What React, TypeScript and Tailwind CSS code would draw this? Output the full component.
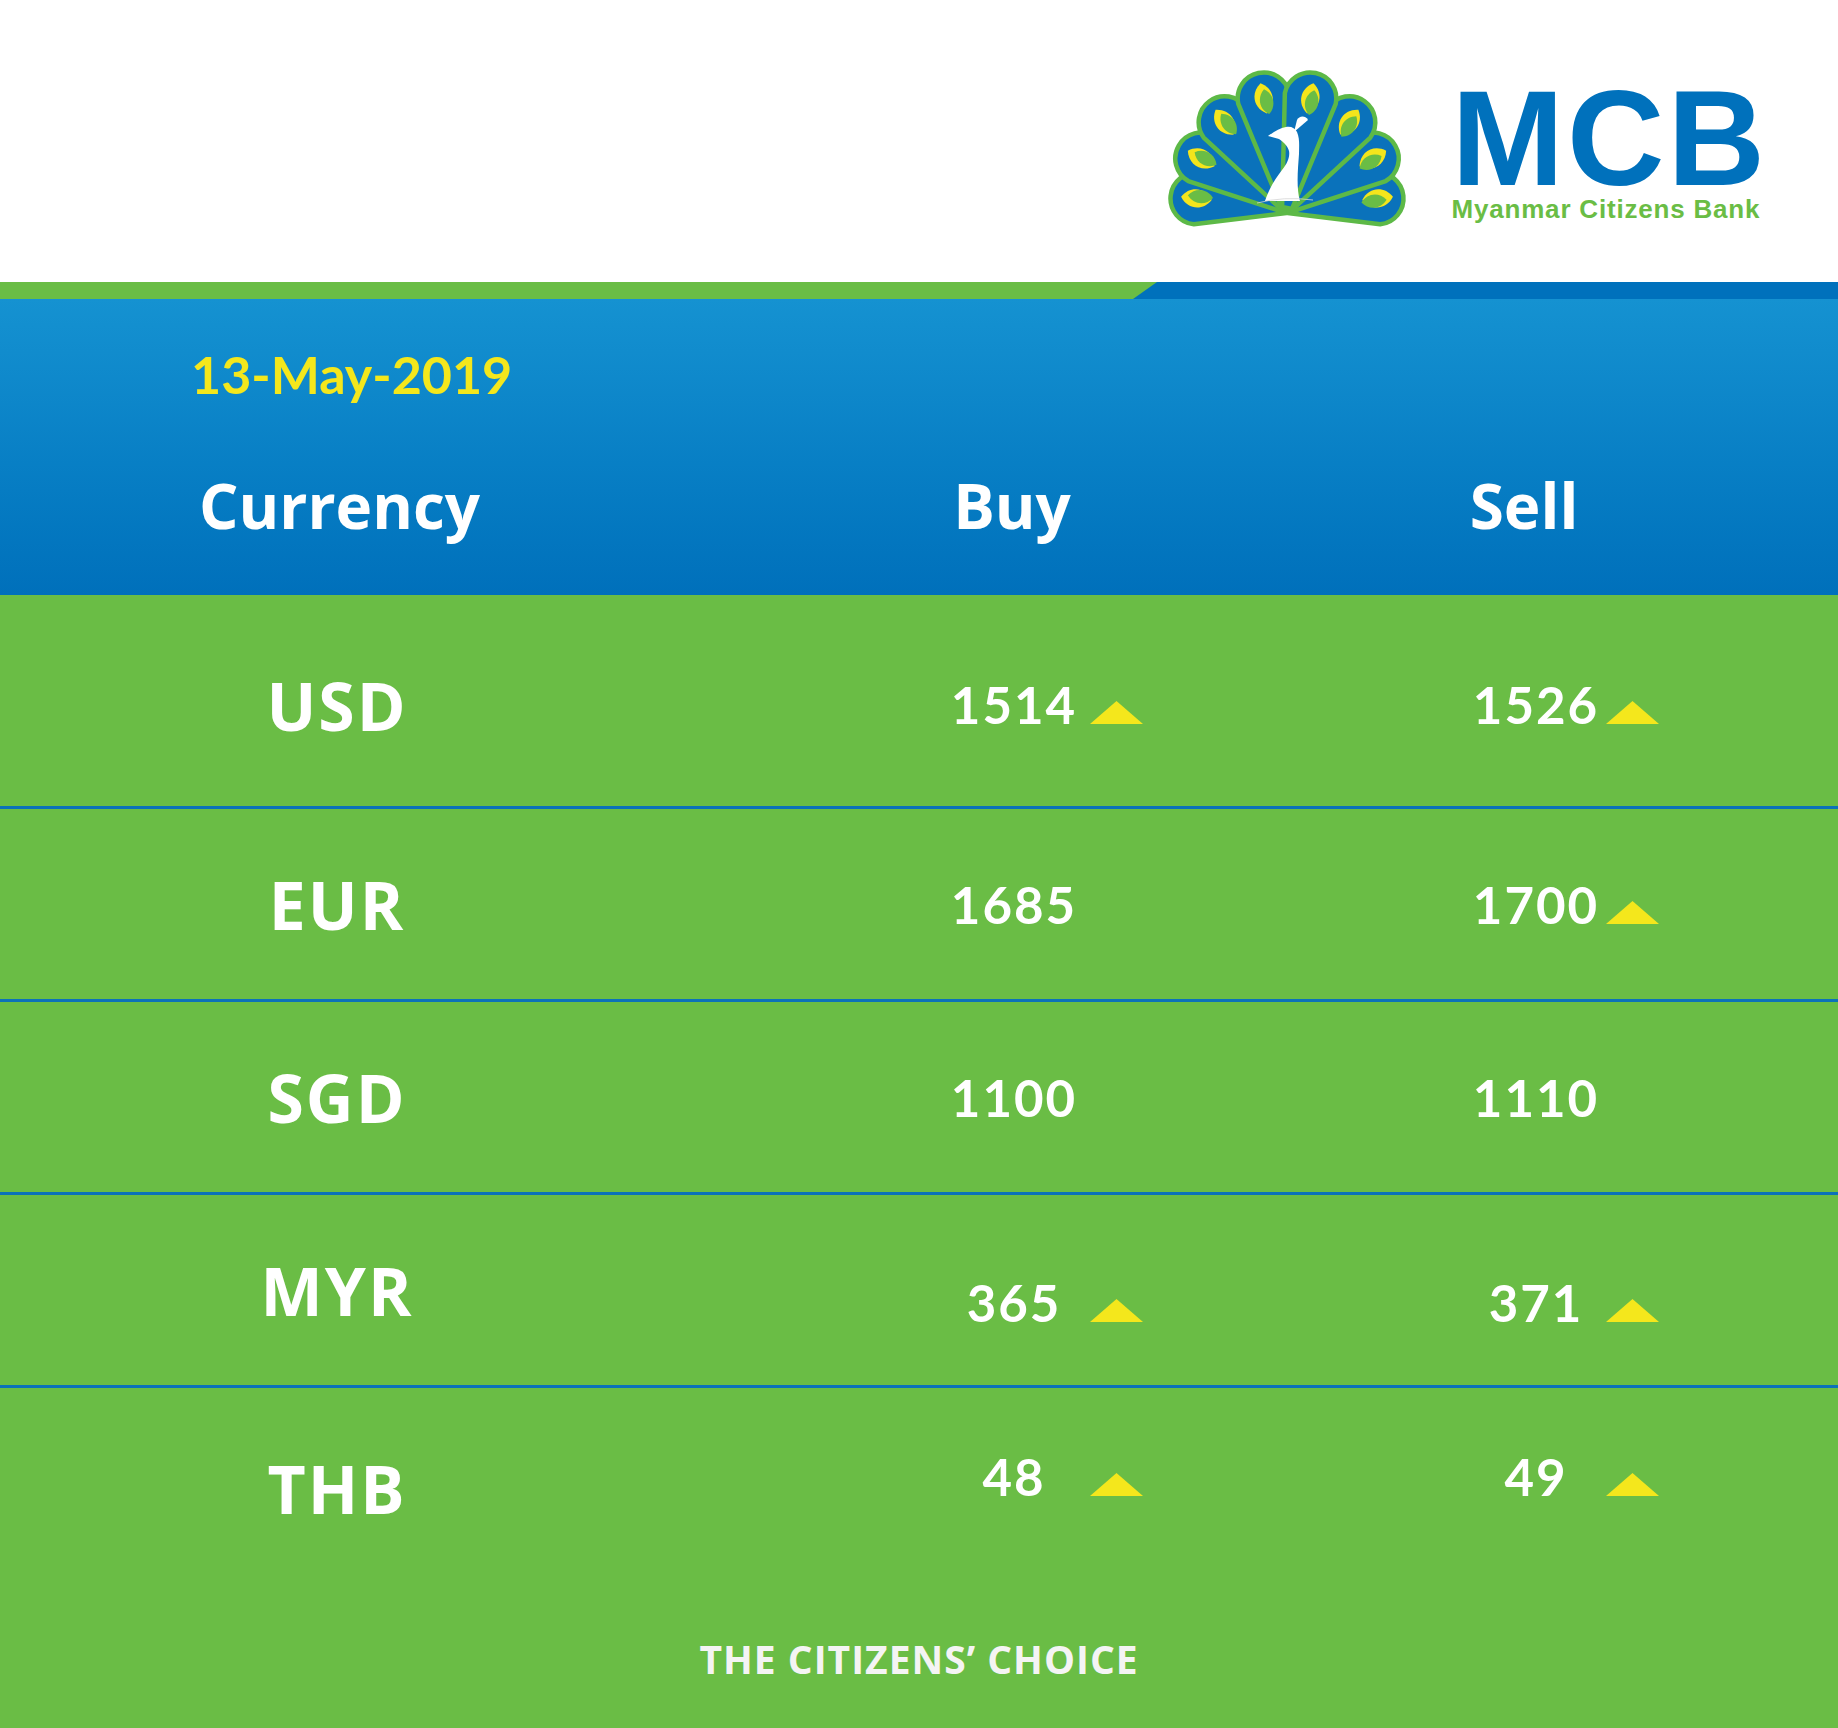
import React from "react";

type Rate = {
  code: string;
  buy: string;
  buyUp: boolean;
  sell: string;
  sellUp: boolean;
  rowCls: string;
  numCls: string;
};

const rates: Rate[] = [
  { code: "USD", buy: "1514", buyUp: true, sell: "1526", sellUp: true, rowCls: "h-[214px] pt-[8px] border-b-[3px]", numCls: "" },
  { code: "EUR", buy: "1685", buyUp: false, sell: "1700", sellUp: true, rowCls: "h-[193px] border-b-[3px]", numCls: "" },
  { code: "SGD", buy: "1100", buyUp: false, sell: "1110", sellUp: false, rowCls: "h-[193px] border-b-[3px]", numCls: "" },
  { code: "MYR", buy: "365", buyUp: true, sell: "371", sellUp: true, rowCls: "h-[193px] border-b-[3px]", numCls: "mt-[24px]" },
  { code: "THB", buy: "48", buyUp: true, sell: "49", sellUp: true, rowCls: "h-[200px]", numCls: "-mt-[24px]" },
];

// tail feathers, bottom pair first so the upper ones sit on top
const feathers = [
  { a: -84, l: 91 },
  { a: 84, l: 91 },
  { a: -60, l: 99 },
  { a: 60, l: 99 },
  { a: -36, l: 106 },
  { a: 36, l: 106 },
  { a: -12, l: 112 },
  { a: 12, l: 112 },
];

function Peacock() {
  const R = 26;
  return (
    <svg width="246" height="162" viewBox="6 8 246 162">
      {feathers.map((f, i) => (
        <g key={i} transform={`translate(128 148) rotate(${f.a})`}>
          <path
            d={`M -5 0 L ${-R} ${-f.l} A ${R} ${R} 0 0 1 ${R} ${-f.l} L 5 0 Z`}
            fill="#0a72bb"
            stroke="#5db947"
            strokeWidth="4.5"
            strokeLinejoin="round"
          />
          <g transform={`translate(0 ${-f.l + 1}) scale(1.1)`}>
            <path d="M 0 -15 C 11 -8, 11 6, 0 13 C -11 6, -11 -8, 0 -15 Z" fill="#f4e51c" />
            <path d="M 2 -9 C 10 -3, 10 8, 2 14 C -6 8, -6 -3, 2 -9 Z" fill="#6abd45" />
          </g>
        </g>
      ))}
      <path
        d="M 106 141 C 110 129, 116 119, 123 110 C 129 103, 131 96, 130 91 C 129 87, 126 83, 120 79 L 109 76 C 115 72, 121 68, 127 67 C 132 66, 136 68, 138 72 C 141 79, 140 87, 140 94 C 139 109, 137 127, 141 141 Z"
        fill="#ffffff"
      />
      <path d="M 135 72 L 138 60 C 140 56, 146 55, 149 60 Z" fill="#ffffff" />
      <path d="M 98 143 Q 125 136 154 140" fill="none" stroke="#d4d4d4" strokeWidth="0.8" />
    </svg>
  );
}

function Up({ show }: { show: boolean }) {
  return (
    <svg width="53" height="23" viewBox="0 0 53 23" className="mb-[6px] shrink-0">
      {show && <polygon points="26.5,0 53,23 0,23" fill="#f4e71c" />}
    </svg>
  );
}

export default function App() {
  return (
    <div className="w-[1838px] bg-white">
      {/* logo header */}
      <div className="h-[282px] flex justify-end items-start pt-[68px] pr-[70px]">
        <Peacock />
        <div className="ml-[41px] mt-[12px] flex flex-col font-['Liberation_Sans',Arial,sans-serif] font-bold">
          <div className="text-[135px] leading-[118px] tracking-[3px] text-[#0071bc]">MCB</div>
          <div className="mt-[1px] text-[26px] leading-[20px] tracking-[0.8px] text-[#6abd45]">
            Myanmar Citizens Bank
          </div>
        </div>
      </div>

      {/* stripe */}
      <div className="flex h-[17px]">
        <div className="w-[1133px] bg-[#6abd45]"></div>
        <svg width="24" height="17" viewBox="0 0 24 17" className="block">
          <rect width="24" height="17" fill="#0071bc" />
          <polygon points="0,0 24,0 0,17" fill="#6abd45" />
        </svg>
        <div className="flex-1 bg-[#0071bc]"></div>
      </div>

      {/* title band */}
      <div className="h-[296px] bg-gradient-to-b from-[#1592d1] to-[#0070bb] flex flex-col pt-[49px]">
        <div className="pl-[191px] font-['Lato',sans-serif] font-bold text-[52px] leading-none text-[#f4e71c]">
          13-May-2019
        </div>
        <div className="mt-[74px] pl-[199px] flex font-['Open_Sans',sans-serif] font-bold text-[62px] leading-none text-white">
          <div className="w-[276px] text-center">Currency</div>
          <div className="ml-[462px] w-[150px] text-center">Buy</div>
          <div className="ml-[372px] w-[130px] text-center">Sell</div>
        </div>
      </div>

      {/* rates */}
      <div className="bg-[#6abd45] text-white">
        {rates.map((r) => (
          <div key={r.code} className={`flex items-center pl-[199px] border-[#0b72b9] ${r.rowCls}`}>
            <div className="w-[276px] text-center font-['Open_Sans',sans-serif] font-bold text-[66px] leading-none tracking-[2px]">
              {r.code}
            </div>
            <div className={`flex items-end font-['Lato',sans-serif] font-bold text-[51px] leading-none tracking-[2px] ${r.numCls}`}>
              <div className="ml-[464px] w-[150px] text-center">{r.buy}</div>
              <div className="ml-[1px]">
                <Up show={r.buyUp} />
              </div>
              <div className="ml-[328px] w-[130px] text-center">{r.sell}</div>
              <div className="ml-[5px]">
                <Up show={r.sellUp} />
              </div>
            </div>
          </div>
        ))}
        <div className="h-[140px] flex justify-center pt-[51px]">
          <div className="font-['Open_Sans',sans-serif] font-bold text-[39px] leading-none tracking-[1px] text-[#f4f4f4]">
            THE CITIZENS’ CHOICE
          </div>
        </div>
      </div>
    </div>
  );
}
